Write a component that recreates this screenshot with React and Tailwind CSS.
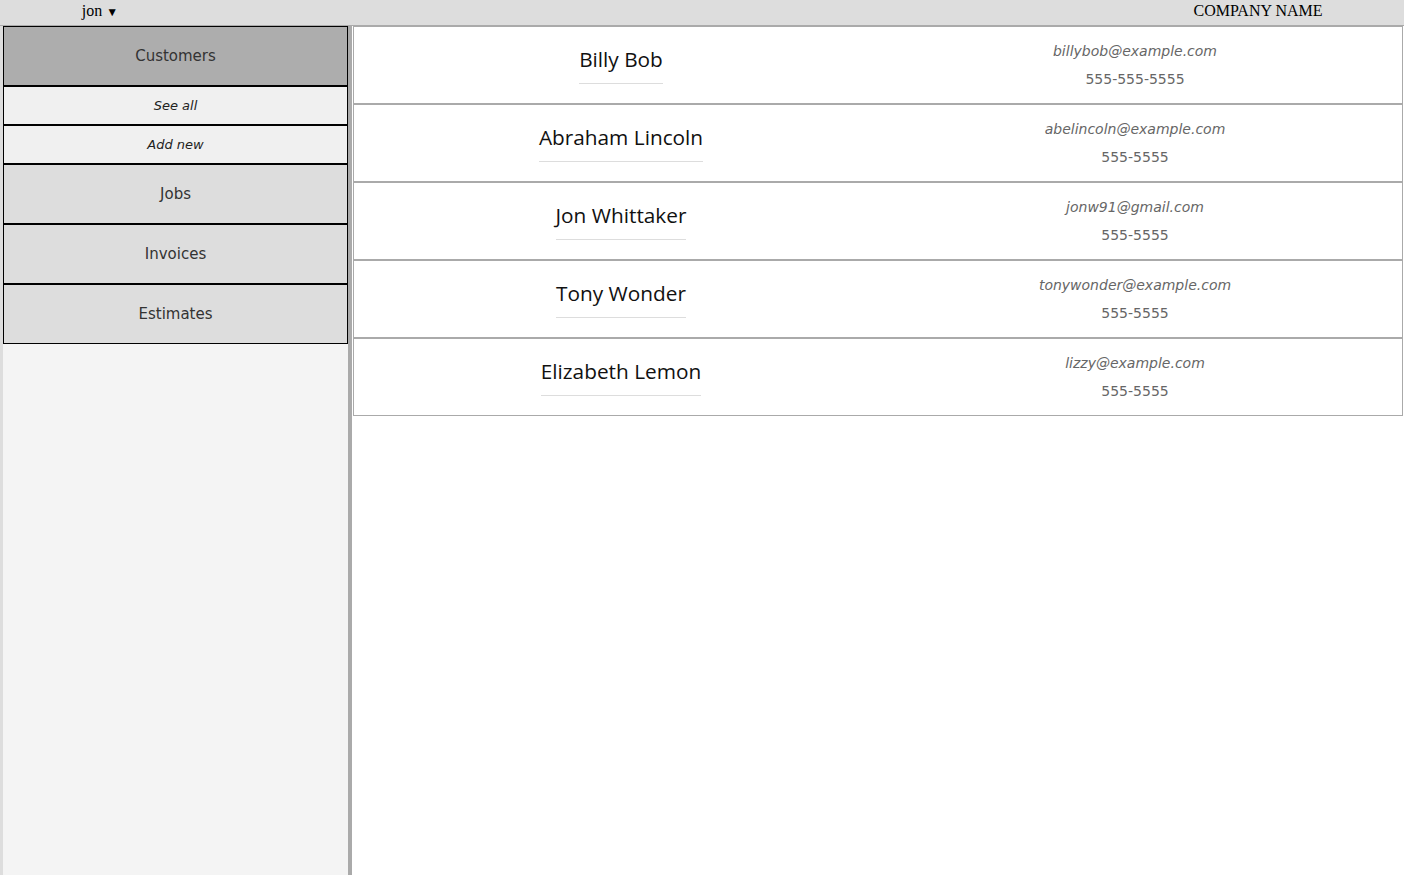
const customers = [
  { name: 'Billy Bob', email: 'billybob@example.com', phone: '555-555-5555' },
  { name: 'Abraham Lincoln', email: 'abelincoln@example.com', phone: '555-5555' },
  { name: 'Jon Whittaker', email: 'jonw91@gmail.com', phone: '555-5555' },
  { name: 'Tony Wonder', email: 'tonywonder@example.com', phone: '555-5555' },
  { name: 'Elizabeth Lemon', email: 'lizzy@example.com', phone: '555-5555' },
];

function NavButton({ label, active }) {
  return (
    <div
      className={`h-[60px] flex items-center justify-center border border-black text-[15px] text-[#333] ${
        active ? 'bg-[#adadad]' : 'bg-[#dddddd]'
      }`}
    >
      {label}
    </div>
  );
}

function SubButton({ label }) {
  return (
    <div className="h-[39px] flex items-center justify-center border border-black bg-[#f0f0f0] text-[13px] italic text-[#222]">
      {label}
    </div>
  );
}

function CustomerRow({ name, email, phone }) {
  return (
    <div className="h-[78px] flex border border-[#aaaaaa]">
      <div className="w-[534px] flex items-center justify-center">
        <div className="font-['Open_Sans',sans-serif] text-[20.8px] leading-[24px] text-[#111] pb-3 border-b border-[#dddddd]">
          {name}
        </div>
      </div>
      <div className="w-[494px] flex flex-col items-center justify-center text-[14px] text-[#666]">
        <div className="italic leading-[28px]">{email}</div>
        <div className="leading-[28px]">{phone}</div>
      </div>
    </div>
  );
}

export default function App() {
  return (
    <div className="h-[875px] flex flex-col bg-white font-['DejaVu_Sans',sans-serif] overflow-hidden">
      <header className="h-[26px] shrink-0 flex items-start justify-between bg-[#dddddd] border-b border-[#aaaaaa] font-['Liberation_Serif',serif] text-[16px] text-black">
        <div className="w-[200px] text-center leading-[22px]">
          jon <span className="text-[12px]">▼</span>
        </div>
        <div className="w-[292px] text-center leading-[22px]">COMPANY NAME</div>
      </header>

      <div className="flex-1 flex min-h-0">
        <aside className="w-[352px] shrink-0 bg-[#f4f4f4] border-l-[3px] border-l-[#dddddd] border-r-4 border-r-[#aaaaaa] flex flex-col">
          <NavButton label="Customers" active />
          <SubButton label="See all" />
          <SubButton label="Add new" />
          <NavButton label="Jobs" />
          <NavButton label="Invoices" />
          <NavButton label="Estimates" />
        </aside>

        <main className="flex-1 bg-white px-px">
          {customers.map((c) => (
            <CustomerRow key={c.name} {...c} />
          ))}
        </main>
      </div>
    </div>
  );
}
